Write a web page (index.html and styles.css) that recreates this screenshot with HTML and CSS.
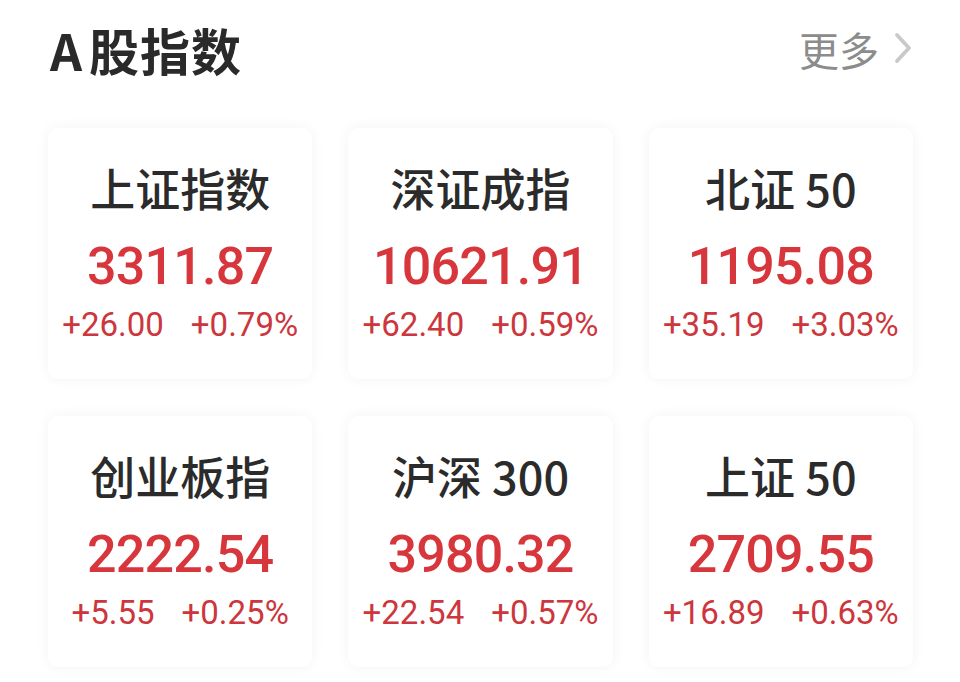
FILE: index.html
```html
<!DOCTYPE html>
<html lang="zh-CN">
<head>
<meta charset="utf-8">
<title>A股指数</title>
<link rel="stylesheet" href="styles.css">
</head>
<body>
<div class="page">
  <header class="header">
    <h1 class="title"><span class="title-a">A</span>股指数</h1>
    <a class="more">更多<svg class="chev" viewBox="0 0 20 32" width="20" height="32"><path d="M4 3 L16 16 L4 29" fill="none" stroke="#c9c9c9" stroke-width="3.8" stroke-linecap="round" stroke-linejoin="round"/></svg></a>
  </header>
  <div class="grid">
    <div class="card">
      <div class="name">上证指数</div>
      <div class="value">3311.87</div>
      <div class="change"><span>+26.00</span><span>+0.79%</span></div>
    </div>
    <div class="card">
      <div class="name">深证成指</div>
      <div class="value">10621.91</div>
      <div class="change"><span>+62.40</span><span>+0.59%</span></div>
    </div>
    <div class="card">
      <div class="name">北证 50</div>
      <div class="value">1195.08</div>
      <div class="change"><span>+35.19</span><span>+3.03%</span></div>
    </div>
    <div class="card">
      <div class="name">创业板指</div>
      <div class="value">2222.54</div>
      <div class="change"><span>+5.55</span><span>+0.25%</span></div>
    </div>
    <div class="card">
      <div class="name">沪深 300</div>
      <div class="value">3980.32</div>
      <div class="change"><span>+22.54</span><span>+0.57%</span></div>
    </div>
    <div class="card">
      <div class="name">上证 50</div>
      <div class="value">2709.55</div>
      <div class="change"><span>+16.89</span><span>+0.63%</span></div>
    </div>
  </div>
</div>
</body>
</html>
```

FILE: styles.css
```css
* { box-sizing: border-box; }
html, body { margin: 0; padding: 0; background: #ffffff; }
body {
  width: 960px;
  height: 682px;
  overflow: hidden;
  font-family: "Noto Sans CJK SC", "Noto Sans", sans-serif;
}
.page {
  padding: 20px 47px 0 48px;
}
.header {
  display: flex;
  align-items: center;
  justify-content: space-between;
  height: 58px;
}
.title {
  margin: 0 0 0 2px;
  font-size: 50px;
  line-height: 58px;
  font-weight: 700;
  color: #2a2a2a;
  letter-spacing: 1px;
}
.title-a {
  margin-right: 6px;
}
.more {
  display: flex;
  align-items: center;
  gap: 14px;
  font-size: 40px;
  line-height: 56px;
  color: #8c8c8c;
  text-decoration: none;
}
.chev { display: block; margin-top: -2px; }
.grid {
  margin-top: 50px;
  display: grid;
  grid-template-columns: repeat(3, 1fr);
  column-gap: 36px;
  row-gap: 37px;
}
.card {
  height: 251px;
  background: #ffffff;
  border-radius: 10px;
  box-shadow: 0 0 14px rgba(0, 0, 0, 0.05);
  display: flex;
  flex-direction: column;
  align-items: center;
  padding-top: 38px;
}
.name {
  font-size: 45px;
  line-height: 44px;
  font-weight: 500;
  color: #2b2b2b;
}
.value {
  margin-top: 31px;
  font-family: Roboto, "Liberation Sans", sans-serif;
  font-size: 52px;
  line-height: 52px;
  font-weight: 500;
  letter-spacing: -0.8px;
  color: #d8363d;
}
.change {
  margin-top: 16px;
  display: flex;
  gap: 27px;
  font-family: Roboto, "Liberation Sans", sans-serif;
  font-size: 33px;
  line-height: 32px;
  color: #cc363c;
}
```
